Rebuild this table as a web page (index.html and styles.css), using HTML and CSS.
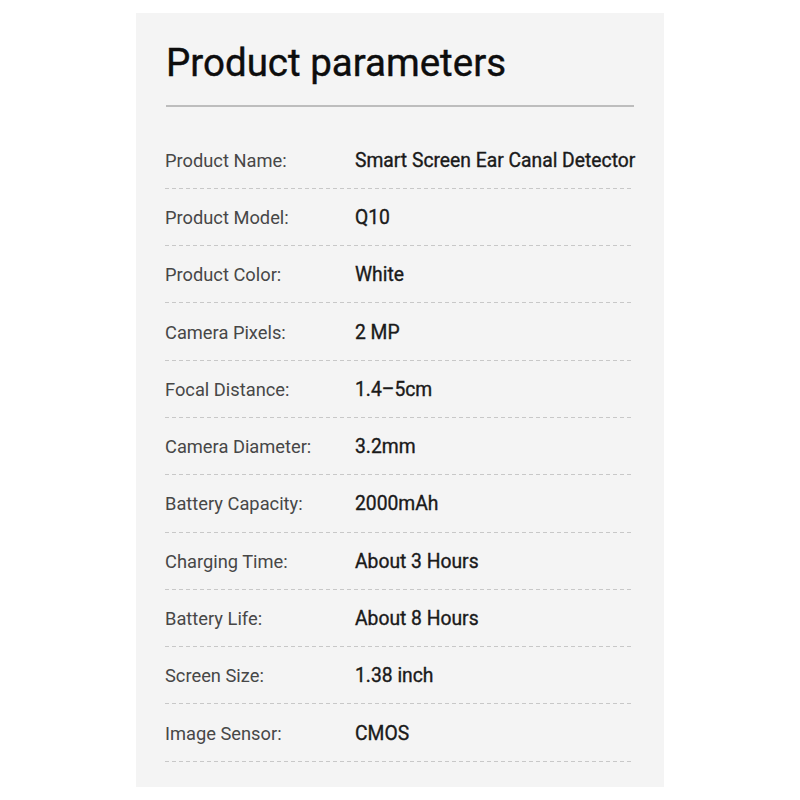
FILE: index.html
```html
<!DOCTYPE html>
<html>
<head>
<meta charset="utf-8">
<link rel="stylesheet" href="styles.css">
</head>
<body>
<div class="panel">
  <h1 class="title">Product parameters</h1>
  <div class="rule"></div>
  <ul class="params">
    <li class="row"><span class="label">Product Name:</span><span class="value">Smart Screen Ear Canal Detector</span></li>
    <li class="row"><span class="label">Product Model:</span><span class="value">Q10</span></li>
    <li class="row"><span class="label">Product Color:</span><span class="value">White</span></li>
    <li class="row"><span class="label">Camera Pixels:</span><span class="value">2 MP</span></li>
    <li class="row"><span class="label">Focal Distance:</span><span class="value">1.4–5cm</span></li>
    <li class="row"><span class="label">Camera Diameter:</span><span class="value">3.2mm</span></li>
    <li class="row"><span class="label">Battery Capacity:</span><span class="value">2000mAh</span></li>
    <li class="row"><span class="label">Charging Time:</span><span class="value">About 3 Hours</span></li>
    <li class="row"><span class="label">Battery Life:</span><span class="value">About 8 Hours</span></li>
    <li class="row"><span class="label">Screen Size:</span><span class="value">1.38 inch</span></li>
    <li class="row"><span class="label">Image Sensor:</span><span class="value">CMOS</span></li>
  </ul>
</div>
</body>
</html>
```

FILE: styles.css
```css
* { box-sizing: border-box; }
html, body { margin: 0; padding: 0; background: #ffffff; }
body {
  font-family: Roboto, "Noto Sans", sans-serif;
  width: 800px;
  height: 800px;
}
.panel {
  width: 528px;
  height: 774px;
  margin: 13px auto 0;
  background: #f4f4f4;
  padding: 28px 30px 0 29px;
}
.title {
  margin: 0 0 0 1px;
  font-size: 38.5px;
  font-weight: 400;
  line-height: 44px;
  color: #0d0d0d;
  letter-spacing: 0;
  -webkit-text-stroke: 0.4px #0d0d0d;
}
.rule {
  height: 1.5px;
  background: #bdbdbd;
  margin-top: 20px;
  margin-left: 1px;
}
.params {
  list-style: none;
  margin: 25px 0 0;
  padding: 0;
}
.row {
  display: flex;
  align-items: center;
  height: 57.3px;
  white-space: nowrap;
  background-image: repeating-linear-gradient(to right, #c8c8c8 0 4px, transparent 4px 7px);
  background-size: 100% 1px;
  background-repeat: no-repeat;
  background-position: left bottom;
}
.label {
  width: 190px;
  flex: none;
  font-size: 18.3px;
  color: #474747;
  font-weight: 400;
}
.value {
  font-size: 19.3px;
  color: #1a1a1a;
  font-weight: 400;
  -webkit-text-stroke: 0.35px #1a1a1a;
}
```
